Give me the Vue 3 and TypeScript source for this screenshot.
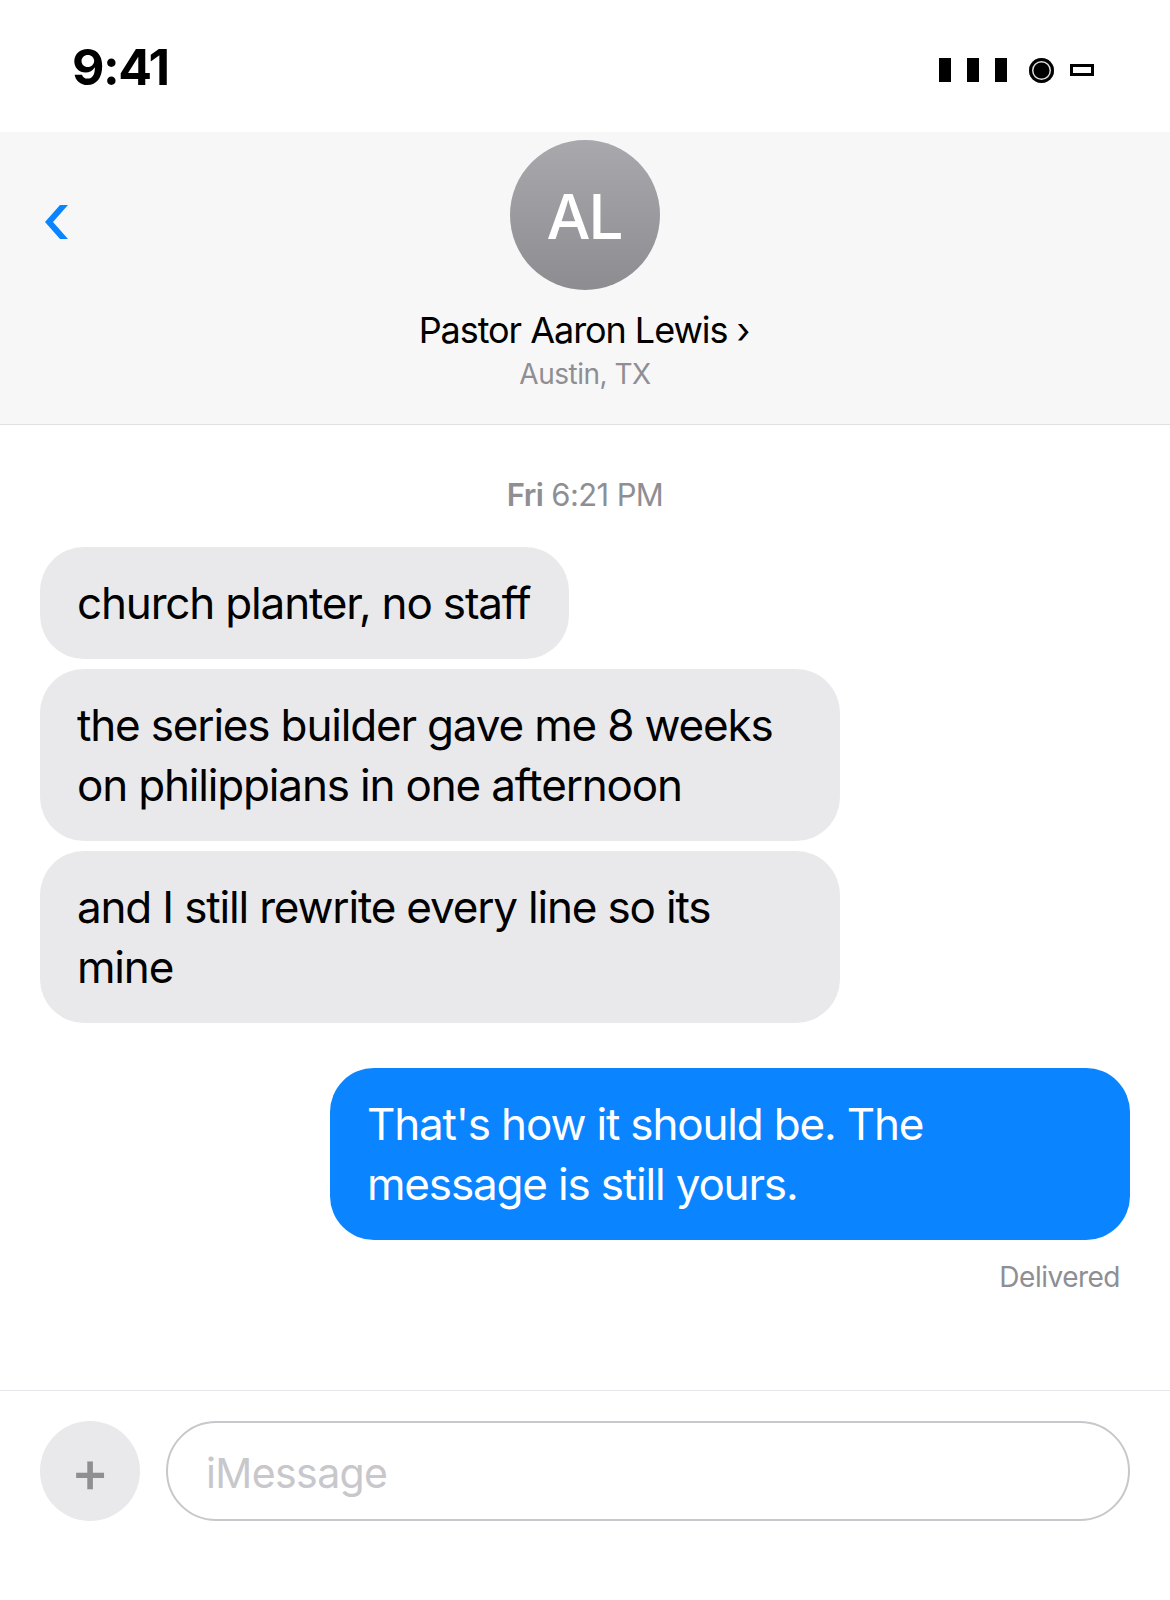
<template>
  <div class="phone">
    <div class="status">
      <span class="clock">9:41</span>
      <div class="status-icons">
        <i class="bar"></i>
        <i class="bar"></i>
        <i class="bar"></i>
        <i class="wifi"></i>
        <i class="batt"></i>
      </div>
    </div>

    <header class="head">
      <svg class="back" viewBox="0 0 24 36"><path d="M15 1h8L8 18l15 17h-8L0 18z" /></svg>
      <div class="avatar">AL</div>
      <div class="name">Pastor Aaron Lewis ›</div>
      <div class="place">Austin, TX</div>
    </header>

    <main class="thread">
      <div class="stamp"><b>Fri</b> 6:21 PM</div>
      <div v-for="m in incoming" :key="m" class="bubble in">{{ m }}</div>
      <div class="bubble out">That's how it should be. The message is still yours.</div>
      <div class="receipt">Delivered</div>
    </main>

    <footer class="composer">
      <div class="plus">+</div>
      <div class="field">iMessage</div>
    </footer>
  </div>
</template>

<script setup lang="ts">
const incoming: string[] = [
  'church planter, no staff',
  'the series builder gave me 8 weeks on philippians in one afternoon',
  'and I still rewrite every line so its mine',
];
</script>

<style>
html,
body {
  margin: 0;
  background: #fff;
}
</style>

<style scoped>
.phone {
  width: 1170px;
  height: 1600px;
  display: flex;
  flex-direction: column;
  background: #fff;
  color: #000;
  font-family: Inter, "Liberation Sans", sans-serif;
  overflow: hidden;
}

.status {
  height: 132px;
  flex: 0 0 132px;
  box-sizing: border-box;
  padding: 2px 76px 0 72px;
  display: flex;
  align-items: center;
  justify-content: space-between;
}

.clock {
  font-size: 50px;
  font-weight: 700;
  letter-spacing: -1.5px;
}

.status-icons {
  display: flex;
  align-items: center;
  margin-top: 6px;
}

.bar {
  width: 12px;
  height: 24px;
  background: #000;
  margin-right: 16px;
}

.wifi {
  width: 25px;
  height: 25px;
  box-sizing: border-box;
  border-radius: 50%;
  background: #000;
  box-shadow: inset 0 0 0 3px #000, inset 0 0 0 4.5px #ddd;
  margin: 0 16px 0 6px;
}

.batt {
  width: 24px;
  height: 12px;
  box-sizing: border-box;
  border: 3px solid #000;
}

.head {
  position: relative;
  height: 293px;
  flex: 0 0 293px;
  box-sizing: border-box;
  padding-top: 8px;
  background: #f7f7f7;
  border-bottom: 1px solid #e0e0e0;
  display: flex;
  flex-direction: column;
  align-items: center;
}

.back {
  position: absolute;
  left: 45px;
  top: 72px;
  width: 24px;
  height: 36px;
  fill: #0a84ff;
}

.avatar {
  width: 150px;
  height: 150px;
  box-sizing: border-box;
  padding: 3px 2px 0 0;
  border-radius: 50%;
  background: linear-gradient(180deg, #a8a8ad, #8c8c91);
  color: #fff;
  font-size: 62px;
  font-weight: 500;
  letter-spacing: -2px;
  display: flex;
  align-items: center;
  justify-content: center;
}

.name {
  margin-top: 18px;
  padding-right: 2px;
  font-size: 36px;
  line-height: 44px;
  letter-spacing: -1.05px;
}

.place {
  margin-top: 4px;
  font-size: 28px;
  line-height: 36px;
  color: #8e8e93;
  letter-spacing: -0.5px;
}

.thread {
  flex: 1;
  box-sizing: border-box;
  padding: 50px 40px 0;
  display: flex;
  flex-direction: column;
  align-items: flex-start;
}

.stamp {
  align-self: center;
  font-size: 31px;
  line-height: 40px;
  color: #8e8e93;
  letter-spacing: -0.6px;
  margin-bottom: 32px;
}

.stamp b {
  font-weight: 600;
}

.bubble {
  max-width: 800px;
  box-sizing: border-box;
  padding: 26px 39px 26px 37px;
  border-radius: 44px;
  font-size: 44px;
  line-height: 60px;
  letter-spacing: -1.17px;
  margin-bottom: 10px;
}

.in {
  background: #e9e9eb;
}

.out {
  width: 800px;
  align-self: flex-end;
  background: #0a84ff;
  color: #fff;
  margin-top: 35px;
}

.receipt {
  align-self: flex-end;
  margin: 5px 10px 0 0;
  font-size: 28px;
  line-height: 44px;
  color: #8e8e93;
  letter-spacing: -0.5px;
}

.composer {
  flex: 0 0 210px;
  box-sizing: border-box;
  padding: 30px 40px 0;
  border-top: 1px solid #e5e5ea;
  display: flex;
  align-items: flex-start;
  gap: 26px;
}

.plus {
  width: 100px;
  height: 100px;
  border-radius: 50%;
  background: #e9e9eb;
  color: #8e8e93;
  font-size: 58px;
  font-weight: 500;
  display: flex;
  align-items: center;
  justify-content: center;
}

.field {
  flex: 1;
  height: 100px;
  box-sizing: border-box;
  padding: 3px 0 0 38px;
  border: 2px solid #c8c8cc;
  border-radius: 50px;
  display: flex;
  align-items: center;
  font-size: 41px;
  letter-spacing: -0.6px;
  color: #c7c7cc;
}
</style>
